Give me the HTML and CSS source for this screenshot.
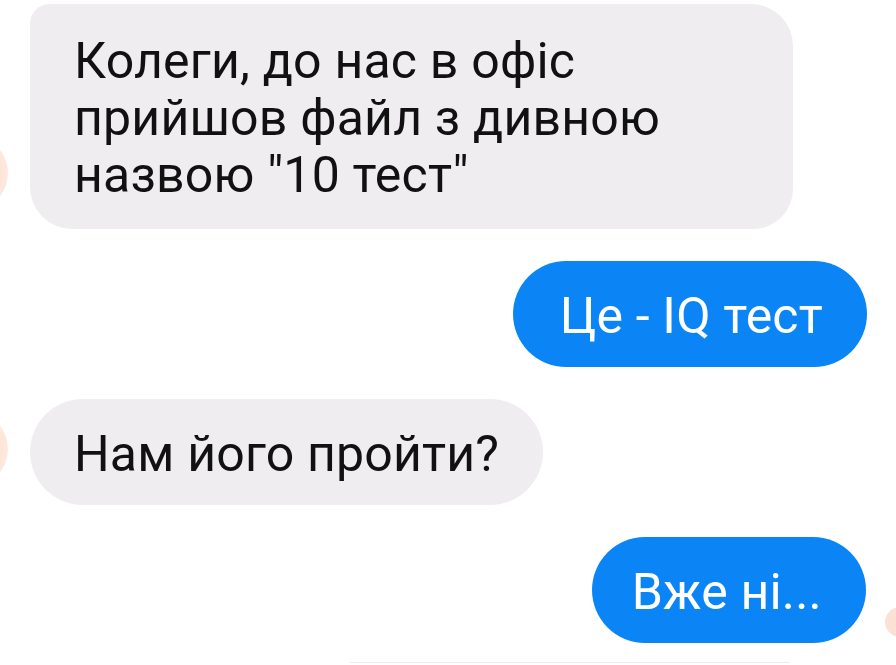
FILE: index.html
```html
<!DOCTYPE html>
<html lang="uk">
<head>
<meta charset="utf-8">
<link rel="stylesheet" href="styles.css">
</head>
<body>
<div class="chat">
  <div class="row left">
    <div class="avatar"></div>
    <div class="bubble grey first">Колеги, до нас в офіс прийшов файл з дивною назвою "10 тест"</div>
  </div>
  <div class="row right">
    <div class="bubble blue wide">Це - IQ тест</div>
  </div>
  <div class="row left">
    <div class="avatar"></div>
    <div class="bubble grey single">Нам його пройти?</div>
  </div>
  <div class="row right last">
    <div class="bubble blue narrow">Вже ні...</div>
    <div class="seen"></div>
  </div>
  <div class="composer-edge"></div>
</div>
</body>
</html>
```

FILE: styles.css
```css
html, body {
  margin: 0;
  padding: 0;
  background: #ffffff;
}
body {
  width: 896px;
  height: 665px;
  overflow: hidden;
  font-family: Roboto, "Noto Sans", sans-serif;
}
.chat {
  display: flex;
  flex-direction: column;
  gap: 32px;
  padding-top: 4px;
}
.row {
  display: flex;
  align-items: flex-end;
}
.row.left {
  justify-content: flex-start;
}
.row.right {
  justify-content: flex-end;
  padding-right: 29px;
}
.avatar {
  flex: none;
  width: 76px;
  height: 76px;
  border-radius: 50%;
  margin-left: -68px;
  margin-right: 22px;
  margin-bottom: 18px;
  background: radial-gradient(circle at 40% 50%, #fbd3bd 0%, #fde3d5 60%, #fff1ea 100%);
}
.bubble {
  font-size: 50px;
  line-height: 57px;
  padding: 27px 44px 22px;
  box-sizing: border-box;
  min-height: 106px;
  letter-spacing: 0.2px;
}
.grey {
  background: #efedf0;
  color: #111111;
}
.blue {
  background: #0b85f5;
  color: #ffffff;
  border-radius: 53px;
}
.blue.wide {
  padding-left: 47px;
}
.blue.narrow {
  padding-left: 40px;
}
.grey.first {
  width: 763px;
  padding-top: 29px;
  padding-bottom: 25px;
  border-radius: 20px 42px 40px 42px;
}
.grey.single {
  border-radius: 53px;
}
.seen {
  flex: none;
  width: 30px;
  height: 30px;
  border-radius: 50%;
  background: #fbe1d4;
  margin-left: 19px;
  margin-right: -48px;
  margin-bottom: 6px;
}
.composer-edge {
  margin-top: -13px;
  margin-left: 350px;
  width: 440px;
  height: 0;
  border-top: 1px solid #ececec;
}
```
